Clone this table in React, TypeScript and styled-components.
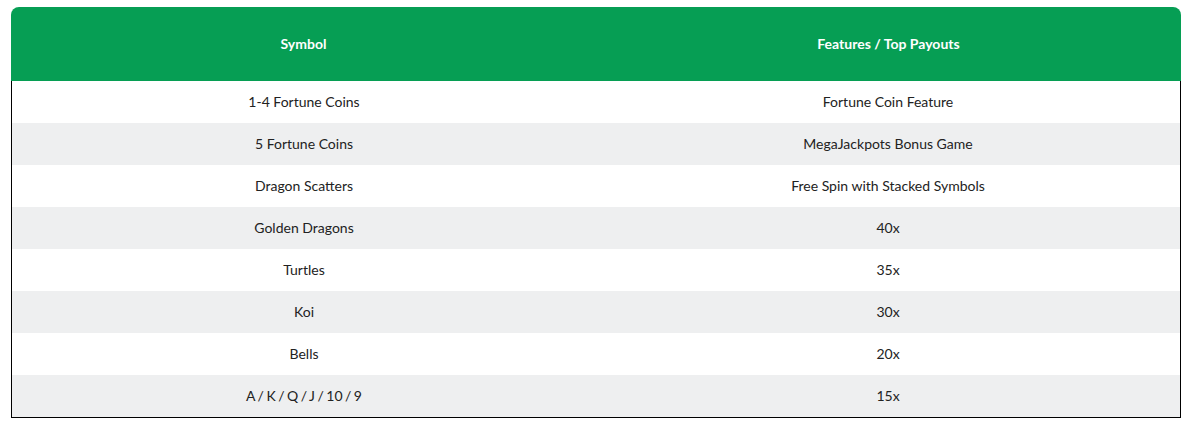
import styled, { createGlobalStyle } from 'styled-components';

const GlobalStyle = createGlobalStyle`
  body {
    margin: 0;
    background: #FFFFFF;
    font-family: Lato, "Open Sans", sans-serif;
  }
`

const Page = styled.div`
  padding: 7px 12px 0 11px;
`

const Table = styled.table`
  width: 1170px;
  border-collapse: separate;
  border-spacing: 0;
  table-layout: fixed;
  font-size: 14px;
  color: #222222;
`

const HeadCell = styled.th`
  height: 74px;
  padding: 0 10px 2px;
  box-sizing: border-box;
  background: #069E54;
  color: #FFFFFF;
  font-weight: 700;
  font-size: 14px;
  text-align: center;
  vertical-align: middle;

  &:first-child {
    border-top-left-radius: 8px;
  }
  &:last-child {
    border-top-right-radius: 8px;
  }
`

const Row = styled.tr<{ $striped: boolean }>`
  background: ${({ $striped }) => ($striped ? '#EEEFF0' : '#FFFFFF')};
`

const Cell = styled.td<{ $last: boolean; $tight?: boolean }>`
  height: ${({ $last }) => ($last ? '43px' : '42px')};
  padding: 0 10px 2px;
  box-sizing: border-box;
  text-align: center;
  vertical-align: middle;
  word-spacing: ${({ $tight }) => ($tight ? '-1.1px' : 'normal')};
  border-bottom: ${({ $last }) => ($last ? '1px solid #000000' : 'none')};

  &:first-child {
    border-left: 1px solid #000000;
  }
  &:last-child {
    border-right: 1px solid #000000;
  }
`

const rows = [
  ['1-4 Fortune Coins', 'Fortune Coin Feature'],
  ['5 Fortune Coins', 'MegaJackpots Bonus Game'],
  ['Dragon Scatters', 'Free Spin with Stacked Symbols'],
  ['Golden Dragons', '40x'],
  ['Turtles', '35x'],
  ['Koi', '30x'],
  ['Bells', '20x'],
  ['A / K / Q / J / 10 / 9', '15x'],
]

export default function App() {
  return (
    <Page>
      <GlobalStyle />
      <Table>
        <thead>
          <tr>
            <HeadCell>Symbol</HeadCell>
            <HeadCell>Features / Top Payouts</HeadCell>
          </tr>
        </thead>
        <tbody>
          {rows.map(([symbol, payout], i) => {
            const last = i === rows.length - 1;
            return (
              <Row key={symbol} $striped={i % 2 === 1}>
                <Cell $last={last} $tight={symbol.includes('/')}>{symbol}</Cell>
                <Cell $last={last}>{payout}</Cell>
              </Row>
            );
          })}
        </tbody>
      </Table>
    </Page>
  );
}
